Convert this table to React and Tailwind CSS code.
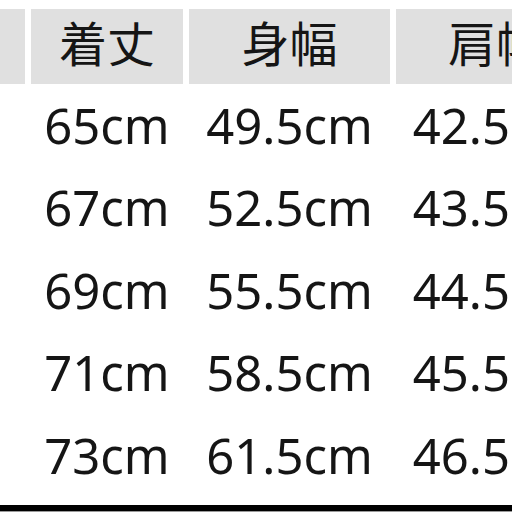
const headers = ['', '着丈', '身幅', '肩幅'];

const rows = [
  ['', '65cm', '49.5cm', '42.5cm'],
  ['', '67cm', '52.5cm', '43.5cm'],
  ['', '69cm', '55.5cm', '44.5cm'],
  ['', '71cm', '58.5cm', '45.5cm'],
  ['', '73cm', '61.5cm', '46.5cm'],
];

const cols = 'grid grid-cols-[130px_152px_201px_200px] gap-x-[6px]';

export default function App() {
  return (
    <div
      className="relative w-[512px] h-[512px] overflow-hidden bg-white text-[#151515]"
      style={{ fontFamily: '"Noto Sans", "Noto Sans CJK JP", sans-serif' }}
    >
      <div className="ml-[-105px] pt-[9px]">
        {/* Header */}
        <div className={cols}>
          {headers.map((h, i) => (
            <div
              key={i}
              className="h-[75px] pb-[5px] bg-[#e0e0e0] flex items-center justify-center text-[48px] leading-none"
            >
              {h}
            </div>
          ))}
        </div>

        {/* Body */}
        <div>
          {rows.map((r, ri) => (
            <div key={ri} className={cols}>
              {r.map((v, i) => (
                <div
                  key={i}
                  className="h-[82.5px] flex items-center justify-center text-[49px] leading-none"
                >
                  {v}
                </div>
              ))}
            </div>
          ))}
        </div>
      </div>

      <div className="absolute left-0 right-0 top-[505px] h-[6px] bg-black" />
      <div className="absolute left-0 right-0 top-[511px] h-[1px] bg-[#9a9a9a]" />
    </div>
  );
}
